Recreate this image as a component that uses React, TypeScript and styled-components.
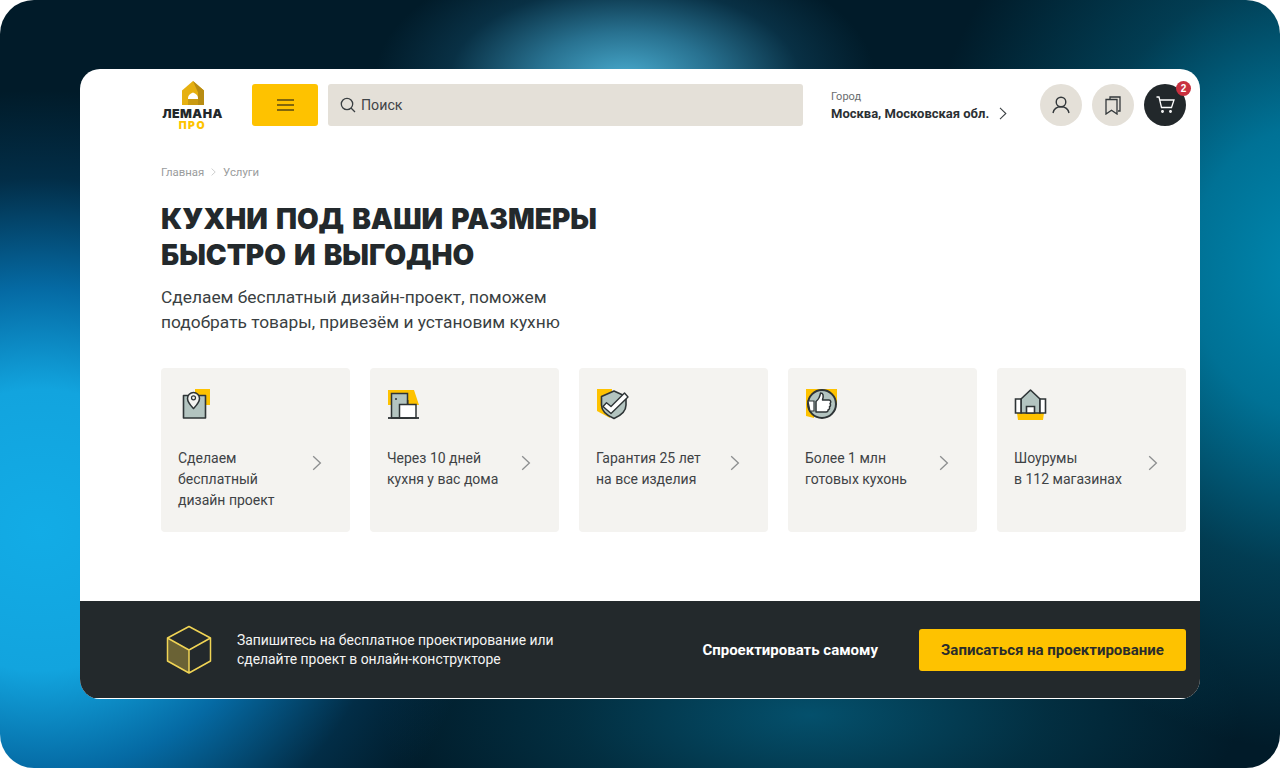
import React from "react";
import styled, { createGlobalStyle } from "styled-components";

const Global = createGlobalStyle`
  html, body { margin: 0; padding: 0; background: #fff; }
  body { font-family: Roboto, "Liberation Sans", sans-serif; width: 1280px; height: 768px; overflow: hidden; }
  * { box-sizing: border-box; }
`;

const Stage = styled.div`
  width: 1280px;
  height: 768px;
  border-radius: 34px;
  padding: 69px 80px;
  background:
    radial-gradient(ellipse 250px 130px at 625px 78px, rgba(72,170,205,1) 0%, rgba(50,135,170,.8) 35%, rgba(20,80,110,.4) 70%, rgba(10,50,75,0) 100%),
    radial-gradient(ellipse 400px 480px at 1310px 270px, #0088b0 0%, rgba(0,118,155,.95) 30%, rgba(2,75,100,.7) 62%, rgba(2,40,60,0) 100%),
    radial-gradient(ellipse 450px 440px at 40px 530px, #12ace6 0%, #12a4de 32%, rgba(5,110,170,.95) 55%, rgba(3,60,95,.55) 80%, rgba(2,30,45,0) 100%),
    radial-gradient(ellipse 430px 170px at 810px 715px, rgba(4,80,108,1) 0%, rgba(3,55,75,.7) 55%, rgba(2,30,45,0) 100%),
    #011b29;
`;

const Card = styled.main`
  width: 1120px;
  height: 630px;
  background: #fff;
  border-radius: 20px;
  overflow: hidden;
  display: flex;
  flex-direction: column;
`;

const Header = styled.header`
  display: flex;
  align-items: center;
  height: 72px;
  padding: 0 14px 0 81px;
  flex: none;
`;

const Logo = styled.div`
  width: 63px;
  flex: none;
  display: flex;
  flex-direction: column;
  align-items: center;
  margin-right: 28px;
`;

const LogoName = styled.span`
  font: 900 12.4px/10px Inter, sans-serif;
  color: #23282b;
  margin-top: 4px;
  letter-spacing: .5px;
`;

const LogoPro = styled.span`
  font: 900 10.5px/8px Inter, sans-serif;
  color: #fdc300;
  margin-top: 3px;
  letter-spacing: 1.6px;
`;

const MenuButton = styled.button`
  width: 66px;
  height: 42px;
  flex: none;
  border: 0;
  border-radius: 3px;
  background: #fec200;
  display: flex;
  align-items: center;
  justify-content: center;
  margin-right: 10px;
  padding: 0;
`;

const Search = styled.div`
  width: 475px;
  height: 42px;
  flex: none;
  background: #e4e0d8;
  border-radius: 3px;
  display: flex;
  align-items: center;
  gap: 5px;
  padding-left: 12px;
  font-size: 14.2px;
  color: #3f4447;
  margin-right: 28px;
`;

const City = styled.div`
  width: 199px;
  flex: none;
  display: flex;
  flex-direction: column;
`;

const CityLabel = styled.span`
  font-size: 11px;
  line-height: 16px;
  color: #6a6d6f;
`;

const CityValue = styled.span`
  font-size: 13px;
  line-height: 17px;
  font-weight: 700;
  color: #2b3033;
  display: flex;
  align-items: center;
  gap: 10px;
`;

const Round = styled.button<{ $dark?: boolean }>`
  position: relative;
  width: 42px;
  height: 42px;
  flex: none;
  border-radius: 50%;
  border: 0;
  padding: 0;
  background: ${p => (p.$dark ? "#22282b" : "#e4e0d8")};
  display: flex;
  align-items: center;
  justify-content: center;
  margin-left: 10px;
`;

const Badge = styled.span`
  position: absolute;
  top: -3px;
  right: -5px;
  width: 15px;
  height: 15px;
  border-radius: 50%;
  background: #c9303f;
  color: #fff;
  font-size: 10px;
  font-weight: 700;
  line-height: 15px;
  text-align: center;
`;

const Content = styled.section`
  flex: 1;
  padding: 24px 14px 0 81px;
`;

const Crumbs = styled.nav`
  display: flex;
  align-items: center;
  gap: 7px;
  height: 14px;
  font-size: 11.4px;
  color: #9a9c9d;
`;

const Title = styled.h1`
  margin: 22px 0 0;
  font: 900 28px/36px Inter, sans-serif;
  word-spacing: 2.5px;
  color: #23292c;
  text-transform: uppercase;
`;

const Lead = styled.p`
  margin: 12px 0 0;
  font-size: 17.35px;
  line-height: 24.5px;
  color: #3a3f42;
`;

const Tiles = styled.div`
  margin-top: 34px;
  width: 1024.5px;
  display: grid;
  grid-template-columns: repeat(5, 188.5px);
  justify-content: space-between;
`;

const Tile = styled.article`
  height: 164px;
  background: #f4f3f0;
  border-radius: 4px;
  padding: 19px 17px 0 17px;
  display: flex;
  flex-direction: column;
`;

const TileIcon = styled.div`
  height: 34px;
  margin-bottom: 27px;
  display: flex;
`;

const TileRow = styled.div`
  display: flex;
  justify-content: space-between;
  align-items: flex-start;
`;

const TileText = styled.span`
  font-size: 14px;
  line-height: 21px;
  color: #3e4245;
  white-space: pre-line;
`;

const Arrow = styled.span`
  display: flex;
  margin-top: 7px;
  margin-right: 11px;
`;

const Banner = styled.footer`
  flex: none;
  height: 97px;
  margin-bottom: 1px;
  background: #23292c;
  display: flex;
  align-items: center;
  padding: 0 14px 0 86px;
`;

const BannerText = styled.p`
  margin: 0 0 0 25px;
  color: #f4f4f4;
  font-size: 13.9px;
  line-height: 19px;
  font-weight: 400;
  white-space: pre-line;
  flex: 1;
`;

const Ghost = styled.button`
  border: 0;
  background: none;
  color: #fff;
  font: 700 15px/20px Roboto, sans-serif;
  padding: 0;
  margin-right: 41px;
`;

const Primary = styled.button`
  width: 267px;
  height: 42px;
  border: 0;
  border-radius: 3px;
  background: #fec200;
  color: #2a2c2b;
  font: 700 15px/20px Roboto, sans-serif;
  padding: 0;
`;

const Chevron = ({ size = 16, color = "#3a3f42" }: { size?: number; color?: string }) => (
  <svg width={size * 0.6} height={size} viewBox="0 0 9.6 16" fill="none">
    <path d="M1.2 1.2 8.4 8 1.2 14.8" stroke={color} strokeWidth="1.3" />
  </svg>
);

const G = "#b3c4c0", D = "#2e3436", Y = "#fec200";

const IconPin = () => (
  <svg width="34" height="34" viewBox="0 0 34 34" fill="none">
    <path d="M17 2h15v16H17z" fill={Y} />
    <path d="M5.500 8.500h22V31h-22z" fill={G} stroke={D} strokeWidth="1.600" strokeLinejoin="round" />
    <path d="M15.500 21.500c-3-3.200-6-6-6-10a6 6 0 0 1 12 0c0 4-3 6.800-6 10z" fill="#f4f3f0" stroke={D} strokeWidth="1.500" />
    <circle cx="15.500" cy="10.800" r="2" stroke={D} strokeWidth="1.200" />
  </svg>
);
const IconDoor = () => (
  <svg width="34" height="34" viewBox="0 0 34 34" fill="none">
    <path d="M1 3h26l5 15H1z" fill={Y} />
    <path d="M4.500 6.500h16V31h-16z" fill={G} stroke={D} strokeWidth="1.500" />
    <circle cx="9" cy="12" r="1" fill={D} />
    <path d="M12.500 17.500H29V31H12.500z" fill="#fff" stroke={D} strokeWidth="1.500" />
    <path d="M20.700 17.500V13" stroke={D} strokeWidth="1.500" />
    <path d="M1 31h31" stroke={D} strokeWidth="1.800" />
  </svg>
);
const IconShield = () => (
  <svg width="34" height="34" viewBox="0 0 34 34" fill="none">
    <path d="M1 2h15l-2 29L1 24z" fill={Y} />
    <path d="M18 4 30 9.500V18c0 6-5 10.500-12 13.500C11 28.500 5.500 24 5.500 18V9.500z" fill={G} stroke={D} strokeWidth="1.600" strokeLinejoin="round" />
    <path d="M7 19.500 15 26.500 32 10l-3.500-4L15 19.500l-4.500-3.700z" fill="#fff" stroke={D} strokeWidth="1.400" strokeLinejoin="round" />
  </svg>
);
const IconThumb = () => (
  <svg width="34" height="34" viewBox="0 0 34 34" fill="none">
    <path d="M1 2h31v16H1z M1 18h8v13l-8-2z" fill={Y} />
    <circle cx="17" cy="17" r="14" fill={G} stroke={D} strokeWidth="2" />
    <path d="M3 14h6v10H5z" fill="#fff" stroke={D} strokeWidth="1.200" />
    <path d="M11 14.500c3-2.500 4-5 4.500-8.500 2.500 0 3.500 2.500 2 7h6.500c2 0 2.200 2.500 1 3.500.8 1 .6 2.800-.5 3.300.4 1.400-.2 2.700-1.300 3-.1 1.500-1 2.200-2.200 2.200H11z" fill="#fff" stroke={D} strokeWidth="1.500" strokeLinejoin="round" />
  </svg>
);
const IconHouse = () => (
  <svg width="34" height="34" viewBox="0 0 34 34" fill="none">
    <path d="M3 26h27l-1 7H4z" fill={Y} />
    <path d="M7 12 16.500 3 26 12v14H7z" fill={G} stroke={D} strokeWidth="1.600" strokeLinejoin="round" />
    <path d="M1.500 12H7v14H1.500zM26 12h5.500v14H26z" fill="#fff" stroke={D} strokeWidth="1.600" />
    <path d="M12.500 19.500h8V26h-8z" fill="#fff" stroke={D} strokeWidth="1.600" />
  </svg>
);

const tiles = [
  { icon: <IconPin />, text: "Сделаем\nбесплатный\nдизайн проект" },
  { icon: <IconDoor />, text: "Через 10 дней\nкухня у вас дома" },
  { icon: <IconShield />, text: "Гарантия 25 лет\nна все изделия" },
  { icon: <IconThumb />, text: "Более 1 млн\nготовых кухонь" },
  { icon: <IconHouse />, text: "Шоурумы\nв 112 магазинах" },
];

export default function App() {
  return (
    <Stage>
      <Global />
      <Card>
        <Header>
          <Logo>
            <svg width="22" height="24" viewBox="0 0 22 24">
              <path d="M11 0 22 9.500V24H0V9.500z" fill="#e6b010" />
              <path d="M11 0 22 9.500V24h-9v-5h3v-7.500z" fill="#b88c12" />
              <path d="M6 17c0-2.500 2-4.500 5-5.500 3 1 5 3 5 5.500v1H6z" fill="#fff" />
              <path d="M6 18h10v6H6z" fill="#c99a12" />
            </svg>
            <LogoName>ЛЕМАНА</LogoName>
            <LogoPro>ПРО</LogoPro>
          </Logo>
          <MenuButton aria-label="Меню">
            <svg width="17" height="12" viewBox="0 0 17 12">
              <path d="M0 1h17M0 6h17M0 11h17" stroke="#5a4a10" strokeWidth="1.600" />
            </svg>
          </MenuButton>
          <Search>
            <svg width="16" height="16" viewBox="0 0 16 16" fill="none">
              <circle cx="7" cy="7" r="5.700" stroke="#3a3f42" strokeWidth="1.300" />
              <path d="m11 11 4 4" stroke="#3a3f42" strokeWidth="1.300" />
            </svg>
            Поиск
          </Search>
          <City>
            <CityLabel>Город</CityLabel>
            <CityValue>
              Москва, Московская обл.
              <Chevron size={13} />
            </CityValue>
          </City>
          <Round aria-label="Профиль">
            <svg width="18" height="18" viewBox="0 0 18 18" fill="none" stroke="#33383b" strokeWidth="1.400">
              <circle cx="9" cy="6" r="4.800" />
              <path d="M1 17c.8-4 4-6.200 8-6.200s7.200 2.200 8 6.200" />
            </svg>
          </Round>
          <Round aria-label="Избранное">
            <svg width="16" height="19" viewBox="0 0 16 19" fill="none" stroke="#33383b" strokeWidth="1.300">
              <path d="M5 3V1h10v14h-2" />
              <path d="M1 3.500h11V18l-5.500-3.800L1 18z" />
            </svg>
          </Round>
          <Round $dark aria-label="Корзина">
            <svg width="19" height="18" viewBox="0 0 19 18" fill="none" stroke="#fff" strokeWidth="1.300">
              <path d="M.5 1H3l2.500 10.500h10L18 4H3.700" />
              <circle cx="6.500" cy="15.500" r=".8" />
              <circle cx="14.500" cy="15.500" r=".8" />
            </svg>
            <Badge>2</Badge>
          </Round>
        </Header>
        <Content>
          <Crumbs>
            Главная
            <Chevron size={8} color="#b5b6b7" />
            Услуги
          </Crumbs>
          <Title>
            Кухни под ваши размеры
            <br />
            быстро и выгодно
          </Title>
          <Lead>
            Сделаем бесплатный дизайн-проект, поможем
            <br />
            подобрать товары, привезём и установим кухню
          </Lead>
          <Tiles>
            {tiles.map(t => (
              <Tile key={t.text}>
                <TileIcon>{t.icon}</TileIcon>
                <TileRow>
                  <TileText>{t.text}</TileText>
                  <Arrow>
                    <Chevron size={16} color="#8c8e8f" />
                  </Arrow>
                </TileRow>
              </Tile>
            ))}
          </Tiles>
        </Content>
        <Banner>
          <svg width="46" height="50" viewBox="0 0 46 50" fill="none">
            <path d="M1.500 13 23 25v23L1.500 36z" fill="#6a6235" />
            <path d="M23 1.500 44.500 13v23L23 48 1.500 36V13zM1.500 13 23 25l21.500-12M23 25v23" stroke="#f0d455" strokeWidth="1.500" strokeLinejoin="round" />
          </svg>
          <BannerText>{"Запишитесь на бесплатное проектирование или\nсделайте проект в онлайн-конструкторе"}</BannerText>
          <Ghost>Спроектировать самому</Ghost>
          <Primary>Записаться на проектирование</Primary>
        </Banner>
      </Card>
    </Stage>
  );
}
